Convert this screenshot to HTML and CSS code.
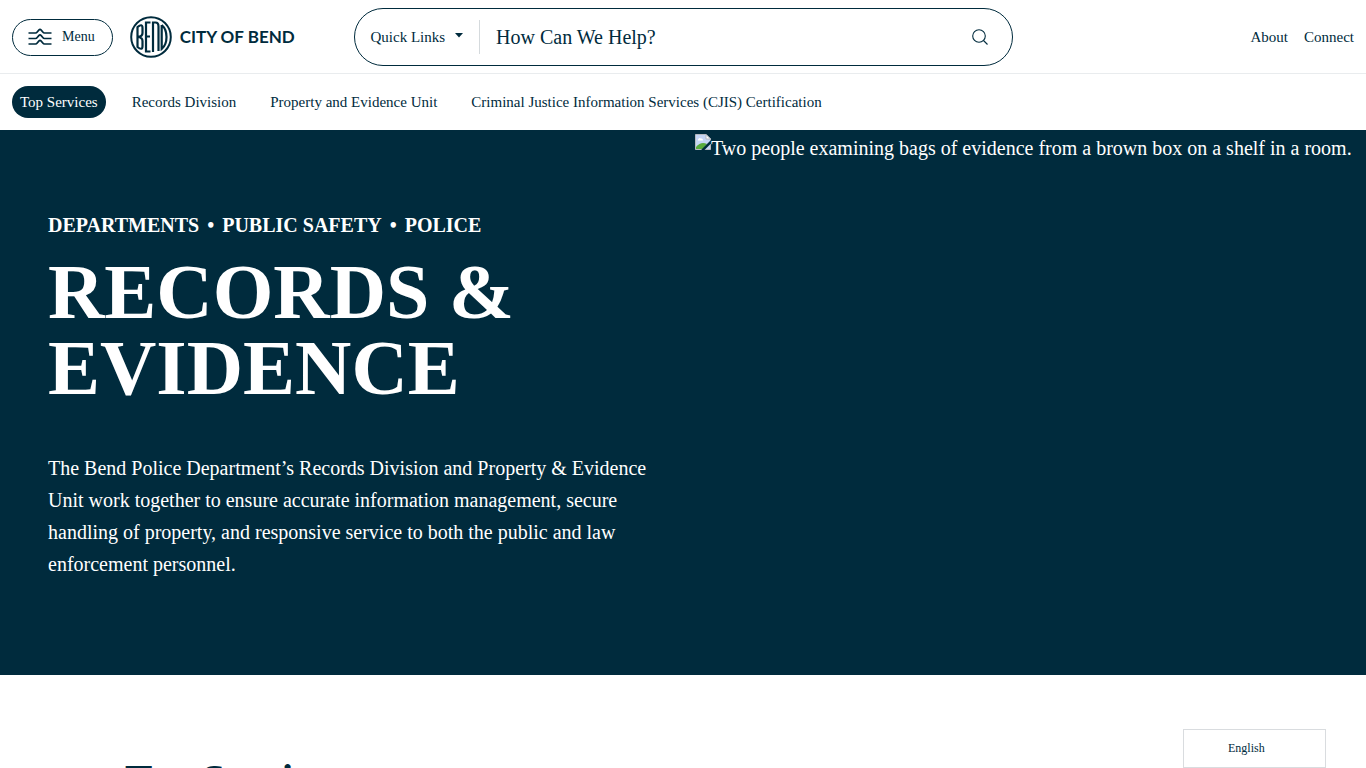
FILE: index.html
```html
<!DOCTYPE html>
<html lang="en">
<head>
<meta charset="utf-8">
<meta name="viewport" content="width=device-width, initial-scale=1">
<title>Records &amp; Evidence | City of Bend</title>
<link rel="stylesheet" href="styles.css">
</head>
<body>
<header class="site-header">
  <div class="header-start">
    <button class="menu-button" type="button">
      <svg class="menu-icon" width="24" height="18" viewBox="0 0 24 18" aria-hidden="true">
        <g fill="none" stroke="currentColor" stroke-width="1.7" stroke-linejoin="round">
          <path d="M.5 5H7.500Q8.500 5 9.200 4L10.800 2.100Q12 .8 13.200 2.100L14.800 4Q15.500 5 16.500 5H23.500"/>
          <path d="M.5 10.500H7.500Q8.500 10.500 9.200 9.500L10.800 7.600Q12 6.300 13.200 7.600L14.800 9.500Q15.500 10.500 16.500 10.500H23.500"/>
          <path d="M.5 16H7.500Q8.500 16 9.200 15L10.800 13.100Q12 11.800 13.200 13.100L14.800 15Q15.500 16 16.500 16H23.500"/>
        </g>
      </svg>
      Menu
    </button>
    <a class="brand" href="#">
      <svg class="brand-mark" width="42" height="42" viewBox="0 0 42 42" aria-hidden="true">
        <g fill="none" stroke="currentColor">
          <circle cx="21" cy="21" r="19.800" stroke-width="2"/>
          <g stroke-width="2.200">
            <path d="M7.500 10.500V31.500M7.500 11Q12.500 7 12.500 12V17Q12.500 20.500 8 21Q12.500 21.500 12.500 25V30Q12.500 35 7.500 31"/>
            <path d="M20.500 6.500H16V35.500H20.500M16 20.500H20"/>
            <path d="M23 36V6.500H25.500Q28.500 6.500 28.500 10.500V35"/>
            <path d="M31.700 9V33Q36.500 29 36.500 21T31.700 9"/>
          </g>
        </g>
      </svg>
      <span class="brand-name">CITY OF BEND</span>
    </a>
  </div>
  <form class="search" role="search">
    <button class="quick-links" type="button">Quick Links
      <svg width="8" height="8" viewBox="0 0 8 8" aria-hidden="true"><path d="M0 0H8L4 4.500Z" fill="currentColor"/></svg>
    </button>
    <input class="search-input" type="search" aria-label="Search" placeholder="How Can We Help?">
    <button class="search-submit" type="submit" aria-label="Submit search">
      <svg width="16" height="16" viewBox="0 0 16 16" aria-hidden="true"><g fill="none" stroke="currentColor" stroke-width="1.100"><circle cx="7" cy="7" r="6.300"/><path d="M11.500 11.500L15.500 15.500"/></g></svg>
    </button>
  </form>
  <nav class="header-links" aria-label="Site">
    <a href="#">About</a>
    <a href="#">Connect</a>
  </nav>
</header>
<nav class="section-nav" aria-label="Page sections">
  <a class="active" href="#top-services">Top Services</a>
  <a href="#">Records Division</a>
  <a href="#">Property and Evidence Unit</a>
  <a href="#">Criminal Justice Information Services (CJIS) Certification</a>
</nav>
<main>
  <section class="hero">
    <div class="hero-text">
      <nav class="breadcrumb" aria-label="Breadcrumb">
        <a href="#">DEPARTMENTS</a><span>•</span><a href="#">PUBLIC SAFETY</a><span>•</span><a href="#">POLICE</a>
      </nav>
      <h1>RECORDS &amp; EVIDENCE</h1>
      <p>The Bend Police Department’s Records Division and Property &amp; Evidence Unit work together to ensure accurate information management, secure handling of property, and responsive service to both the public and law enforcement personnel.</p>
    </div>
    <div class="hero-media">
      <svg width="16" height="16" viewBox="0 0 16 16" aria-hidden="true">
        <path d="M.5 .5H11L15.500 5V15.500H.5Z" fill="#c5d5f4" stroke="#b5b9bf"/>
        <path d="M3 5.500Q4 3 6 4.500Q8 4 8 6.500H3Z" fill="#fff"/>
        <path d="M1 15V13Q6 7 12 10L8 15Z" fill="#58ab3d"/>
        <path d="M11 .5V5H15.500Z" fill="#fff" stroke="#b5b9bf"/>
        <path d="M16 6L6.500 15.500V16H9.500L16 9.500Z" fill="#002b3d"/>
      </svg>
      <span>Two people examining bags of evidence from a brown box on a shelf in a room.</span>
    </div>
  </section>
  <section class="services" id="top-services">
    <h2>Top Services</h2>
  </section>
</main>
<button class="language" type="button">English</button>
</body>
</html>
```
FILE: styles.css
```css
* { box-sizing: border-box; }
body {
  margin: 0;
  color: #002b3d;
  background: #fff;
  font-family: "Liberation Serif", "Times New Roman", serif;
  font-size: 15px;
}
a { color: inherit; text-decoration: none; }
button, input { font: inherit; color: inherit; background: none; border: 0; padding: 0; }
button { cursor: pointer; }
svg { flex: none; }

.site-header {
  display: grid;
  grid-template-columns: 1fr minmax(0, 659px) 1fr;
  align-items: center;
  padding: 8px 12px 7px;
  border-bottom: 1px solid #e9ecee;
}
.header-start { display: flex; align-items: center; gap: 17px; }
.menu-button {
  display: flex;
  align-items: center;
  gap: 10px;
  height: 37px;
  padding: 0 17px 0 15px;
  border: 1px solid #002b3d;
  border-radius: 19px;
  font-size: 14px;
}
.brand { display: flex; align-items: center; gap: 8px; }
.brand-name { font: 700 17px/24px Lato, sans-serif; white-space: nowrap; }

.search {
  display: flex;
  align-items: center;
  height: 58px;
  padding: 0 24px 0 16px;
  border: 1px solid #002b3d;
  border-radius: 29px;
}
.quick-links {
  display: flex;
  align-items: center;
  gap: 10px;
  height: 34px;
  padding-right: 16px;
  border-right: 1px solid #d5dadd;
  white-space: nowrap;
}
.search-input { flex: 1; min-width: 0; padding-left: 16px; font-size: 20px; outline: 0; }
.search-input::placeholder { color: inherit; opacity: 1; }
.search-submit { display: flex; }
.header-links { display: flex; justify-content: flex-end; gap: 16px; }

.section-nav { display: flex; flex-wrap: wrap; gap: 18px; padding: 12px; }
.section-nav a { padding: 0 8px; border-radius: 16px; line-height: 32px; }
.section-nav .active { color: #fff; background: #002b3d; }

.hero {
  display: grid;
  grid-template-columns: repeat(2, minmax(0, 1fr));
  gap: 24px;
  color: #fff;
  background: #002b3d;
  font-size: 20px;
}
.hero-text { padding: 80px 16px 95px 48px; }
.breadcrumb { display: flex; gap: 8px; line-height: 30px; font-weight: 700; }
.hero h1 { margin: 14px 0 46px; font-size: 78px; line-height: 76px; }
.hero p { margin: 0; line-height: 32px; }
.hero-media { display: flex; align-items: flex-start; padding: 4px 12px 0 0; }
.hero-media span { line-height: 28px; }

.services { padding: 78px 125px; }
.services h2 { margin: 0; font-size: 41px; line-height: 50px; }
.language {
  position: fixed;
  right: 40px;
  bottom: 0;
  width: 143px;
  height: 39px;
  padding-left: 44px;
  border: 1px solid #d9dcdf;
  background: #fff;
  font-size: 12px;
  text-align: left;
}
```
